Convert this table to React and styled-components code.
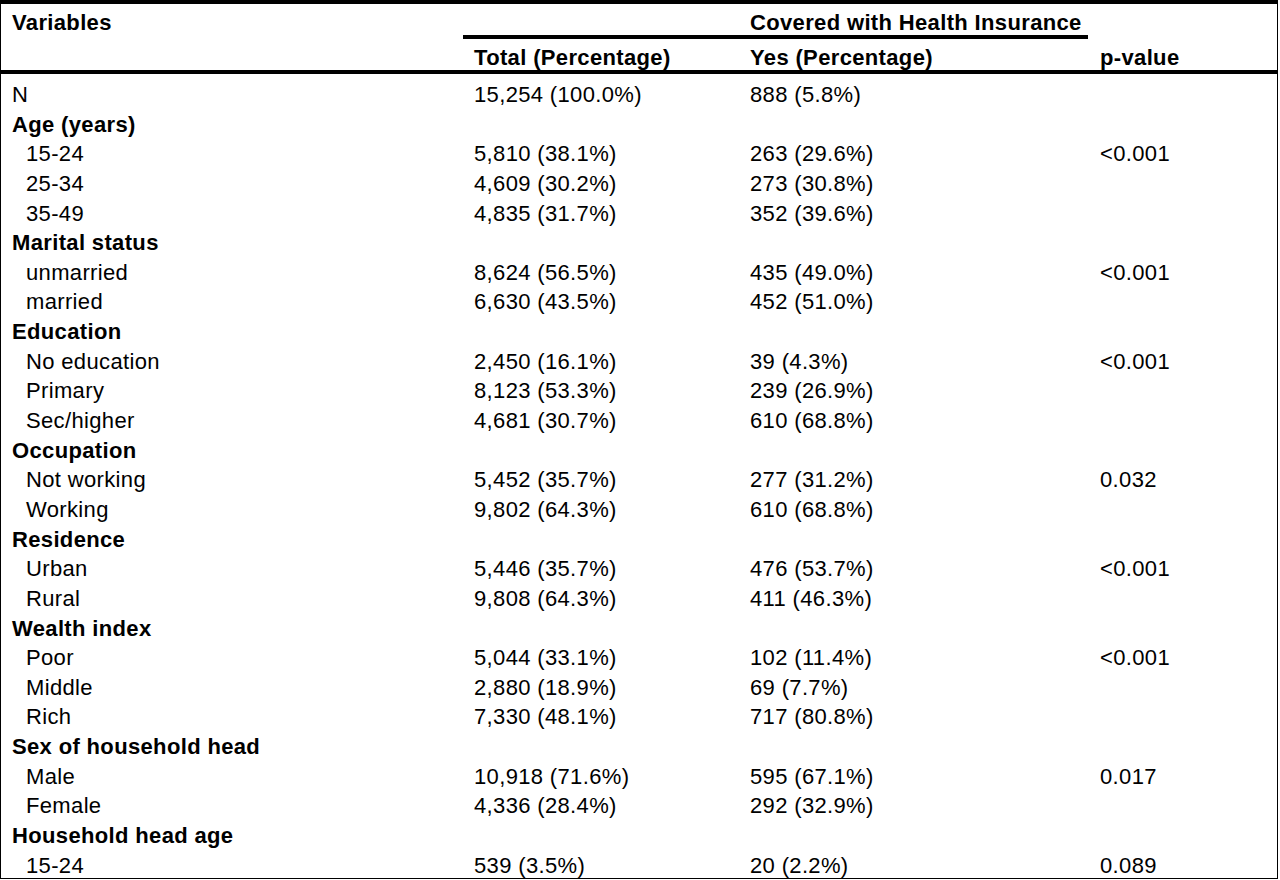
import React from 'react'
import styled, { createGlobalStyle } from 'styled-components'

const GlobalStyle = createGlobalStyle`
  html, body {
    margin: 0;
    padding: 0;
    background: #fff;
  }
  body {
    font-family: "Liberation Sans", Arial, sans-serif;
    color: #000;
  }
`;

const COLUMNS = '462px 276px 349px 1fr';

const Table = styled.div`
  width: 1278px;
  height: 879px;
  box-sizing: border-box;
  border-top: 4px solid #000;
  border-left: 1px solid #000;
  border-right: 1px solid #000;
  border-bottom: 1px solid #000;
  font-size: 22px;
  letter-spacing: 0.35px;
  overflow: hidden;
`;

const Head = styled.div`
  display: grid;
  grid-template-columns: ${COLUMNS};
  grid-template-rows: 35px 31px;
  border-bottom: 4px solid #000;
  font-weight: bold;
  line-height: 22px;
`;

const HeadCell = styled.div`
  grid-column: ${p => p.$col};
  grid-row: ${p => p.$row};
  padding-left: ${p => p.$pad || 11}px;
  padding-top: ${p => (p.$row === 1 ? 8.4 : 8.4)}px;
  box-sizing: border-box;
  white-space: nowrap;
`;

const GroupHead = styled(HeadCell)`
  border-bottom: 4px solid #000;
`;

const Body = styled.div`
  padding-top: 6px;
`;

const Row = styled.div`
  display: grid;
  grid-template-columns: ${COLUMNS};
  height: 29.65px;
  line-height: 29.65px;
  font-weight: ${p => (p.$group ? 'bold' : 'normal')};
`;

const Cell = styled.div`
  padding-left: ${p => p.$pad || 11}px;
  white-space: nowrap;
`;

const rows = [
  { label: 'N', total: '15,254 (100.0%)', yes: '888 (5.8%)' },
  { group: 'Age (years)' },
  { label: '15-24', total: '5,810 (38.1%)', yes: '263 (29.6%)', p: '<0.001', sub: true },
  { label: '25-34', total: '4,609 (30.2%)', yes: '273 (30.8%)', sub: true },
  { label: '35-49', total: '4,835 (31.7%)', yes: '352 (39.6%)', sub: true },
  { group: 'Marital status' },
  { label: 'unmarried', total: '8,624 (56.5%)', yes: '435 (49.0%)', p: '<0.001', sub: true },
  { label: 'married', total: '6,630 (43.5%)', yes: '452 (51.0%)', sub: true },
  { group: 'Education' },
  { label: 'No education', total: '2,450 (16.1%)', yes: '39 (4.3%)', p: '<0.001', sub: true },
  { label: 'Primary', total: '8,123 (53.3%)', yes: '239 (26.9%)', sub: true },
  { label: 'Sec/higher', total: '4,681 (30.7%)', yes: '610 (68.8%)', sub: true },
  { group: 'Occupation' },
  { label: 'Not working', total: '5,452 (35.7%)', yes: '277 (31.2%)', p: '0.032', sub: true },
  { label: 'Working', total: '9,802 (64.3%)', yes: '610 (68.8%)', sub: true },
  { group: 'Residence' },
  { label: 'Urban', total: '5,446 (35.7%)', yes: '476 (53.7%)', p: '<0.001', sub: true },
  { label: 'Rural', total: '9,808 (64.3%)', yes: '411 (46.3%)', sub: true },
  { group: 'Wealth index' },
  { label: 'Poor', total: '5,044 (33.1%)', yes: '102 (11.4%)', p: '<0.001', sub: true },
  { label: 'Middle', total: '2,880 (18.9%)', yes: '69 (7.7%)', sub: true },
  { label: 'Rich', total: '7,330 (48.1%)', yes: '717 (80.8%)', sub: true },
  { group: 'Sex of household head' },
  { label: 'Male', total: '10,918 (71.6%)', yes: '595 (67.1%)', p: '0.017', sub: true },
  { label: 'Female', total: '4,336 (28.4%)', yes: '292 (32.9%)', sub: true },
  { group: 'Household head age' },
  { label: '15-24', total: '539 (3.5%)', yes: '20 (2.2%)', p: '0.089', sub: true },
]

export default function App() {
  return (
    <>
      <GlobalStyle />
      <Table>
        <Head>
          <HeadCell $col="1" $row={1}>Variables</HeadCell>
          <GroupHead $col="2 / 4" $row={1} $pad={287}>Covered with Health Insurance</GroupHead>
          <HeadCell $col="2" $row={2}>Total (Percentage)</HeadCell>
          <HeadCell $col="3" $row={2}>Yes (Percentage)</HeadCell>
          <HeadCell $col="4" $row={2} $pad={12}>p-value</HeadCell>
        </Head>
        <Body>
          {rows.map((r, i) =>
            r.group ? (
              <Row key={i} $group>
                <Cell>{r.group}</Cell>
              </Row>
            ) : (
              <Row key={i}>
                <Cell $pad={r.sub ? 25 : 11}>{r.label}</Cell>
                <Cell>{r.total}</Cell>
                <Cell>{r.yes}</Cell>
                <Cell $pad={12}>{r.p}</Cell>
              </Row>
            )
          )}
        </Body>
      </Table>
    </>
  )
}
